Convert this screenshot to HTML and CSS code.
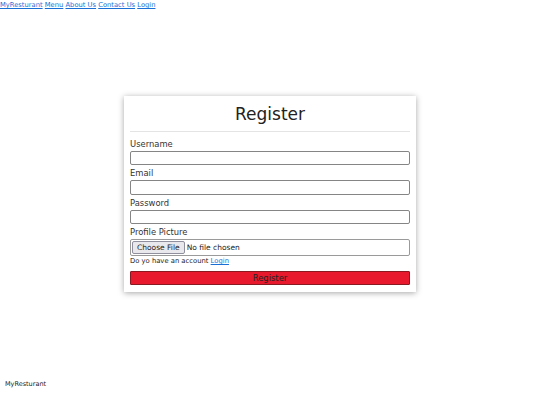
FILE: index.html
```html
<!DOCTYPE html>
<html>
<head>
<meta charset="utf-8">
<link rel="stylesheet" href="styles.css">
</head>
<body>
<nav class="nav">
  <a href="#">MyResturant</a>
  <a href="#">Menu</a>
  <a href="#">About Us</a>
  <a href="#">Contact Us</a>
  <a href="#">Login</a>
</nav>
<main class="main">
  <form class="card">
    <h1 class="title">Register</h1>
    <hr class="rule">
    <label class="label">Username</label>
    <input class="field" type="text">
    <label class="label">Email</label>
    <input class="field" type="text">
    <label class="label">Password</label>
    <input class="field" type="password">
    <label class="label">Profile Picture</label>
    <div class="file">
      <span class="file-btn">Choose File</span>
      <span class="file-text">No file chosen</span>
    </div>
    <p class="note">Do yo have an account <a href="#">Login</a></p>
    <button class="submit" type="button">Register</button>
  </form>
</main>
<footer class="footer">MyResturant</footer>
</body>
</html>
```
FILE: styles.css
```css
html, body {
  margin: 0;
  padding: 0;
  background: #fff;
  font-family: "DejaVu Sans", sans-serif;
  color: #222;
}
.nav {
  font-size: 6.75px;
  line-height: 10px;
  height: 10px;
}
.nav a {
  color: #1a6fd6;
}
.main {
  display: flex;
  justify-content: center;
  padding-top: 86px;
  height: 282px;
}
.card {
  height: 196px;
  box-sizing: border-box;
  width: 292px;
  padding: 0 6px;
  background: #fff;
  box-shadow: 0 1px 6px rgba(0,0,0,0.35);
  display: flex;
  flex-direction: column;
}
.title {
  margin: 7px 0 0;
  font-size: 17px;
  font-weight: normal;
  text-align: center;
  line-height: 22px;
  color: #222;
}
.rule {
  margin: 5.5px 0 6px;
  border: 0;
  border-top: 1px solid #e4e4e4;
}
.label {
  font-size: 8.4px;
  line-height: 12px;
  color: #333;
}
.field {
  box-sizing: border-box;
  height: 14.5px;
  margin: 1px 0 2px;
  border: 1px solid #858585;
  border-radius: 2px;
  padding: 0;
  flex-shrink: 0;
}
.file {
  box-sizing: border-box;
  height: 16.5px;
  margin: 1px 0 1.5px;
  border: 1px solid #9a9a9a;
  border-radius: 2px;
  display: flex;
  align-items: center;
  padding: 1px;
  font-size: 7.5px;
  color: #222;
  flex-shrink: 0;
}
.file-btn {
  background: #e9e9ed;
  border: 1px solid #8f8f9d;
  border-radius: 2px;
  height: 12.5px;
  padding: 0 4px;
  box-sizing: border-box;
  display: flex;
  align-items: center;
}
.file-text {
  margin-left: 2px;
}
.note {
  margin: 0 0 4.5px;
  font-size: 6.8px;
  line-height: 9px;
}
.note a {
  color: #1a6fd6;
}
.submit {
  box-sizing: border-box;
  height: 14px;
  flex-shrink: 0;
  border: 1px solid #8a1a22;
  border-radius: 1px;
  background: #e8192c;
  font-family: "DejaVu Sans", sans-serif;
  font-size: 8.4px;
  color: #222;
  padding: 0;
}
.footer {
  padding: 0 5px;
  font-size: 6.5px;
  line-height: 9px;
  margin-top: 2px;
}
```
